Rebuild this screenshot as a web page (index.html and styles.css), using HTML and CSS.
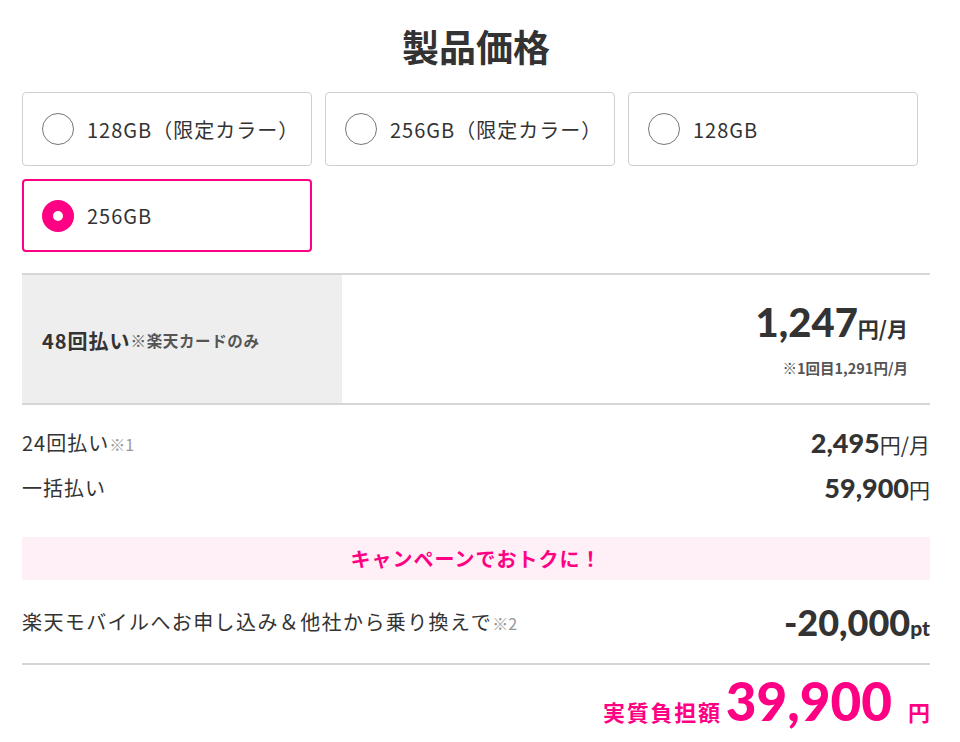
FILE: index.html
```html
<!DOCTYPE html>
<html lang="ja">
<head>
<meta charset="utf-8">
<link rel="stylesheet" href="styles.css">
</head>
<body>
<div class="wrap">
  <h1 class="title">製品価格</h1>
  <div class="options">
    <label class="opt"><span class="radio"></span><span class="opt-label">128GB（限定カラー）</span></label>
    <label class="opt"><span class="radio"></span><span class="opt-label">256GB（限定カラー）</span></label>
    <label class="opt"><span class="radio"></span><span class="opt-label">128GB</span></label>
    <label class="opt selected"><span class="radio"></span><span class="opt-label">256GB</span></label>
  </div>

  <div class="plan">
    <div class="plan-head"><span class="plan-name">48回払い</span><span class="plan-note">※楽天カードのみ</span></div>
    <div class="plan-body">
      <div class="plan-price"><span class="big">1,247</span><span class="unit">円/月</span></div>
      <div class="plan-sub">※1回目1,291円/月</div>
    </div>
  </div>

  <div class="rows">
    <div class="row"><span class="row-label">24回払い<span class="note">※1</span></span><span class="row-val"><span class="num">2,495</span><span class="yen">円/月</span></span></div>
    <div class="row"><span class="row-label">一括払い</span><span class="row-val"><span class="num">59,900</span><span class="yen">円</span></span></div>
  </div>

  <div class="campaign">キャンペーンでおトクに！</div>

  <div class="discount">
    <span class="row-label">楽天モバイルへお申し込み＆他社から乗り換えで<span class="note">※2</span></span>
    <span class="disc-val"><span class="disc-num">-20,000</span><span class="pt">pt</span></span>
  </div>

  <div class="total">
    <span class="total-label">実質負担額</span><span class="total-num">39,900</span><span class="total-yen">円</span>
  </div>
</div>
</body>
</html>
```

FILE: styles.css
```css
* { box-sizing: border-box; }
html, body { margin: 0; padding: 0; background: #fff; }
body {
  font-family: "Noto Sans CJK JP", "Noto Sans", sans-serif;
  color: #333;
}
.wrap {
  width: 908px;
  margin-left: 22px;
  padding-top: 20px;
}
.title {
  margin: 0;
  text-align: center;
  font-size: 37px;
  line-height: 52px;
  font-weight: 700;
  color: #333;
}
.options {
  margin-top: 20px;
  display: grid;
  grid-template-columns: 290px 290px 290px;
  column-gap: 13px;
  row-gap: 13px;
}
.opt {
  height: 74px;
  border: 1px solid #cfcfcf;
  border-radius: 4px;
  display: flex;
  align-items: center;
  padding-left: 19px;
}
.opt.selected {
  border: 2px solid #ff0084;
  padding-left: 18px;
  height: 73px;
}
.radio {
  width: 32px;
  height: 32px;
  border-radius: 50%;
  border: 1px solid #777;
  flex: none;
  background: #fff;
}
.selected .radio {
  border: 11px solid #ff0084;
}
.opt-label {
  margin-left: 13px;
  font-size: 20px;
  letter-spacing: 0.05em;
  color: #333;
}
.plan {
  margin-top: 21px;
  border-top: 2px solid #d6d6d6;
  border-bottom: 2px solid #d6d6d6;
  display: flex;
  height: 132px;
}
.plan-head {
  width: 320px;
  background: #eeeeee;
  display: flex;
  align-items: center;
  padding-left: 20px;
  padding-top: 2px;
}
.plan-name {
  font-size: 20px;
  font-weight: 700;
  letter-spacing: 0.05em;
  color: #333;
}
.plan-note {
  font-size: 15.5px;
  font-weight: 700;
  letter-spacing: 0.04em;
  color: #555;
}
.plan-body {
  flex: 1;
  display: flex;
  flex-direction: column;
  align-items: flex-end;
  padding-right: 22px;
  padding-top: 24px;
}
.plan-price {
  line-height: 46px;
}
.big {
  font-family: Lato, "Noto Sans CJK JP", sans-serif;
  font-weight: 900;
  font-size: 40px;
  color: #333;
}
.unit {
  font-size: 21px;
  font-weight: 700;
}
.plan-sub {
  margin-top: 4px;
  font-size: 14.5px;
  font-weight: 700;
  color: #555;
}
.rows {
  margin-top: 21px;
  display: flex;
  flex-direction: column;
  gap: 13px;
}
.row, .discount {
  display: flex;
  justify-content: space-between;
  align-items: center;
}
.row { height: 32px; }
.row-label {
  font-size: 20px;
  letter-spacing: 0.05em;
  color: #333;
}
.note {
  font-size: 16px;
  letter-spacing: 0;
  color: #999;
}
.num {
  font-family: Lato, "Noto Sans CJK JP", sans-serif;
  font-weight: 900;
  font-size: 27px;
}
.yen {
  font-size: 21px;
}
.campaign {
  margin-top: 34px;
  height: 43px;
  background: #fff0f7;
  color: #ff0084;
  font-weight: 700;
  font-size: 20px;
  letter-spacing: 0.05em;
  display: flex;
  align-items: center;
  justify-content: center;
}
.discount {
  height: 85px;
  border-bottom: 2px solid #d6d6d6;
}
.discount .row-label {
  letter-spacing: 0.07em;
}
.disc-num {
  font-family: Lato, "Noto Sans CJK JP", sans-serif;
  font-weight: 900;
  font-size: 36px;
}
.pt {
  font-family: Lato, sans-serif;
  font-weight: 900;
  font-size: 21px;
}
.total {
  display: flex;
  justify-content: flex-end;
  align-items: baseline;
  color: #ff0084;
  height: 76px;
  padding-top: 2px;
}
.total-label {
  font-size: 22px;
  font-weight: 700;
  letter-spacing: 0.08em;
}
.total-num {
  font-family: Lato, "Noto Sans CJK JP", sans-serif;
  font-weight: 900;
  font-size: 53px;
  margin-left: 4px;
  line-height: 68px;
}
.total-yen {
  font-size: 22px;
  font-weight: 700;
  margin-left: 16px;
}
```
